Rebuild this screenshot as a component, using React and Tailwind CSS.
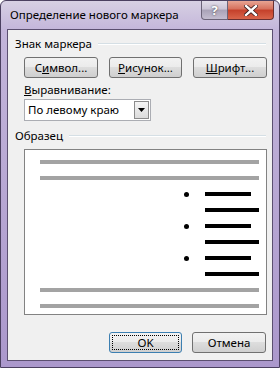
import React from 'react';

const font = { fontFamily: '"Noto Sans", "Open Sans", sans-serif' };

const WinButton = ({ children, focused = false, className = '' }) => (
  <button
    type="button"
    className={`h-[21px] rounded-[3px] border text-[11.5px] leading-none text-black ${
      focused ? 'border-[#3c7fb1] p-[2px]' : 'border-[#707070]'
    } bg-[linear-gradient(#f2f2f2_0%,#ebebeb_49%,#dddddd_50%,#cfcfcf_100%)] ${className}`}
  >
    {focused ? (
      <span className="flex h-full w-full items-center justify-center border border-dotted border-black">
        {children}
      </span>
    ) : (
      <span className="flex h-full w-full items-center justify-center">{children}</span>
    )}
  </button>
);

const GroupLabel = ({ children }) => (
  <div className="flex h-[12px] items-center gap-[6px] pr-[6px]">
    <span className="text-[11.5px] leading-none">{children}</span>
    <div className="flex-1 border-t border-b border-t-[#d5dfe5] border-b-white" />
  </div>
);

const Gray = () => <div className="h-[4px] w-full bg-[#a3a3a3]" />;

const Bullet = () => (
  <div className="flex h-[4px] items-center">
    <div className="w-[144px]" />
    <div className="h-[5px] w-[5px] rounded-full bg-black" />
    <div className="w-[16px]" />
    <div className="h-[4px] w-[46px] bg-black" />
  </div>
);

const Long = () => (
  <div className="flex h-[4px] justify-end">
    <div className="h-[4px] w-[54px] bg-black" />
  </div>
);

export default function App() {
  return (
    <div
      style={font}
      className="flex h-[368px] w-[280px] flex-col overflow-hidden rounded-t-[6px] border border-[#4b4060] bg-[linear-gradient(#d7d0e3_0px,#c3b5da_30px,#ab98cc_100%)] text-black"
    >
      {/* title bar */}
      <div className="flex h-[28px] shrink-0 items-start">
        <div className="flex h-full flex-1 items-center pl-[9px] text-[11.5px] leading-none text-black">
          Определение нового маркера
        </div>
        <div className="mr-[5px] flex h-[19px]">
          <div className="flex w-[27px] items-center justify-center rounded-bl-[4px] border border-t-0 border-[#6b6378] bg-[linear-gradient(#e2dde9_0%,#cbc4d6_45%,#a9a2b7_50%,#c4bdd0_100%)] text-[13px] font-bold leading-none text-white [text-shadow:0_0_2px_#333]">
            ?
          </div>
          <div className="flex w-[46px] items-center justify-center rounded-br-[4px] border border-l-0 border-t-0 border-[#6b3030] bg-[linear-gradient(#e8a493_0%,#d6705c_45%,#c5402a_50%,#d9654b_100%)]">
            <svg width="14" height="11" viewBox="0 0 14 11">
              <path d="M2 1 L12 10 M12 1 L2 10" stroke="#3a1a1a" strokeWidth="4" strokeLinecap="square" />
              <path d="M2 1 L12 10 M12 1 L2 10" stroke="white" strokeWidth="2.4" strokeLinecap="square" />
            </svg>
          </div>
        </div>
      </div>

      {/* client area */}
      <div className="mx-[6px] mb-[6px] flex flex-1 flex-col border border-[#5b4f70] bg-[#f0f0f0] pl-[7px] pt-[8px]">
        <GroupLabel>Знак маркера</GroupLabel>

        <div className="mt-[7px] flex gap-[11px] pl-[9px]">
          <WinButton className="w-[74px]">
            С<span className="underline">и</span>мвол...
          </WinButton>
          <WinButton className="w-[73px]">
            <span className="underline">Р</span>исунок...
          </WinButton>
          <WinButton className="w-[74px]">
            <span className="underline">Ш</span>рифт...
          </WinButton>
        </div>

        <div className="mt-[4px] h-[16px] pl-[9px] text-[11.5px] leading-[16px]">
          <span className="underline">В</span>ыравнивание:
        </div>

        <div className="ml-[9px] mt-[1px] flex h-[22px] w-[127px] items-center border border-[#abadb3] bg-white pl-[3px] pr-[1px]">
          <span className="flex-1 text-[11.5px] leading-none">По левому краю</span>
          <div className="flex h-[18px] w-[15px] items-center justify-center border border-[#8b8b8b] bg-[linear-gradient(#f4f4f4,#dcdcdc)]">
            <svg width="7" height="4" viewBox="0 0 7 4">
              <path d="M0 0 H7 L3.5 4 Z" fill="black" />
            </svg>
          </div>
        </div>

        <div className="mt-[9px]">
          <GroupLabel>Образец</GroupLabel>
        </div>

        <div className="ml-[9px] mr-[5px] mt-[7px] flex h-[166px] flex-col gap-[12px] border border-[#828282] bg-white pl-[15px] pr-[7px] pt-[10px]">
          <Gray />
          <Gray />
          <Bullet />
          <Long />
          <Bullet />
          <Long />
          <Bullet />
          <Long />
          <Gray />
          <Gray />
        </div>

        <div className="mt-[17px] flex justify-end gap-[10px] pr-[6px]">
          <WinButton focused className="w-[73px]">
            OK
          </WinButton>
          <WinButton className="w-[74px]">Отмена</WinButton>
        </div>
      </div>
    </div>
  );
}
